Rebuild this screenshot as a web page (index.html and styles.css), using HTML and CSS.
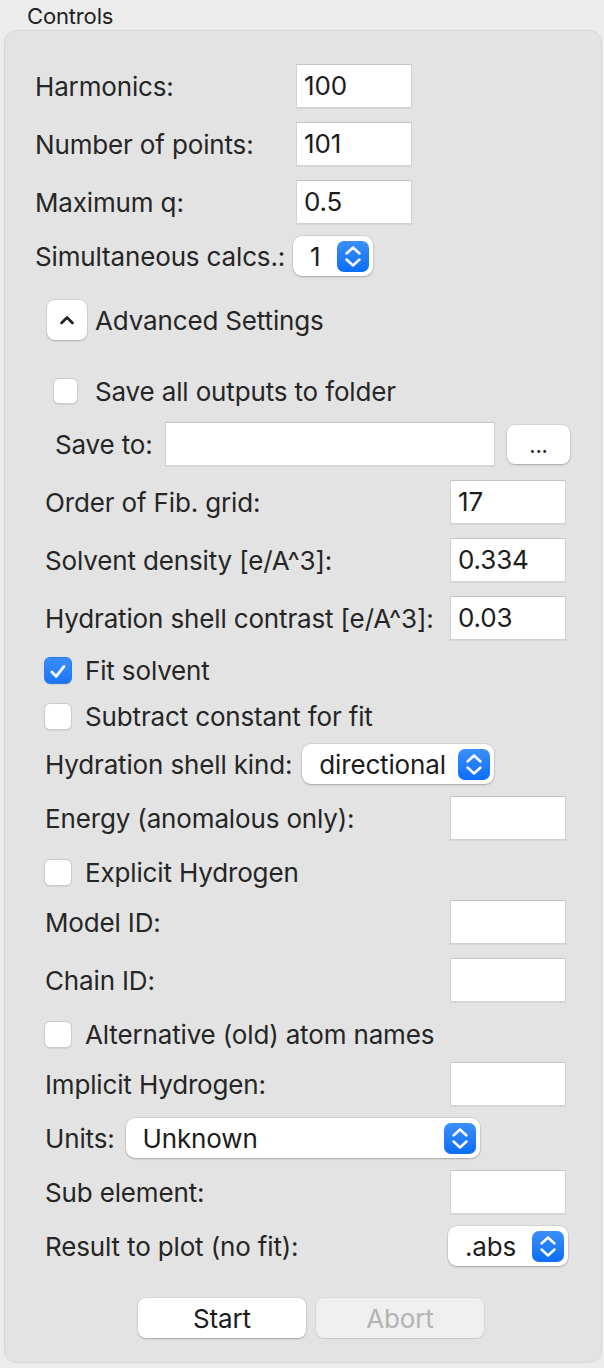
FILE: index.html
```html
<!DOCTYPE html>
<html>
<head>
<meta charset="utf-8">
<link rel="stylesheet" href="styles.css">
</head>
<body>
<div class="title">Controls</div>
<div class="panel">
  <div class="basic">
    <div class="row g14"><span class="lbl blbl">Harmonics:</span><div class="field">100</div></div>
    <div class="row g14"><span class="lbl blbl">Number of points:</span><div class="field">101</div></div>
    <div class="row g12"><span class="lbl blbl">Maximum q:</span><div class="field">0.5</div></div>
    <div class="row prow g24"><span class="lbl blbl">Simultaneous calcs.:</span>
      <div class="popup spin"><span class="ptext">1</span><span class="stepper"><svg width="32" height="31" viewBox="0 0 32 31"><path d="M9.5 12.5L16 6.5L22.5 12.5M9.5 18.5L16 24.5L22.5 18.5" fill="none" stroke="#fff" stroke-width="2.4" stroke-linecap="round" stroke-linejoin="round"/></svg></span></div>
    </div>
    <div class="row prow g37 adv"><span class="disc"><svg width="40" height="40" viewBox="0 0 40 40"><path d="M14.5 23L20 17.5L25.5 23" fill="none" stroke="#1e1e1e" stroke-width="2.6" stroke-linecap="round" stroke-linejoin="round"/></svg></span><span class="lbl">Advanced Settings</span></div>
  </div>
  <div class="advanced">
    <div class="row crow g17 saveall"><span class="chk small"></span><span class="lbl">Save all outputs to folder</span></div>
    <div class="row g14 saveto"><span class="lbl">Save to:</span><div class="field wide"></div><div class="btn dots">...</div></div>
    <div class="row g14 sb"><span class="lbl">Order of Fib. grid:</span><div class="field">17</div></div>
    <div class="row g14 sb"><span class="lbl">Solvent density [e/A^3]:</span><div class="field">0.334</div></div>
    <div class="row g16 sb"><span class="lbl">Hydration shell contrast [e/A^3]:</span><div class="field">0.03</div></div>
    <div class="row crow g18"><span class="chk on"><svg width="28" height="27" viewBox="0 0 28 27"><path d="M7.5 14L12 18.8L20.5 8" fill="none" stroke="#fff" stroke-width="3" stroke-linecap="round" stroke-linejoin="round"/></svg></span><span class="lbl">Fit solvent</span></div>
    <div class="row crow g14"><span class="chk"></span><span class="lbl">Subtract constant for fit</span></div>
    <div class="row prow g12"><span class="lbl">Hydration shell kind:</span>
      <div class="popup kind"><span class="ptext">directional</span><span class="stepper"><svg width="32" height="31" viewBox="0 0 32 31"><path d="M9.5 12.5L16 6.5L22.5 12.5M9.5 18.5L16 24.5L22.5 18.5" fill="none" stroke="#fff" stroke-width="2.4" stroke-linecap="round" stroke-linejoin="round"/></svg></span></div>
    </div>
    <div class="row g18 sb"><span class="lbl">Energy (anomalous only):</span><div class="field"></div></div>
    <div class="row crow g14"><span class="chk"></span><span class="lbl">Explicit Hydrogen</span></div>
    <div class="row g14 sb"><span class="lbl">Model ID:</span><div class="field"></div></div>
    <div class="row g18 sb"><span class="lbl">Chain ID:</span><div class="field"></div></div>
    <div class="row crow g14"><span class="chk"></span><span class="lbl">Alternative (old) atom names</span></div>
    <div class="row g12 sb"><span class="lbl">Implicit Hydrogen:</span><div class="field"></div></div>
    <div class="row prow g12"><span class="lbl">Units:</span>
      <div class="popup units"><span class="ptext">Unknown</span><span class="stepper"><svg width="32" height="31" viewBox="0 0 32 31"><path d="M9.5 12.5L16 6.5L22.5 12.5M9.5 18.5L16 24.5L22.5 18.5" fill="none" stroke="#fff" stroke-width="2.4" stroke-linecap="round" stroke-linejoin="round"/></svg></span></div>
    </div>
    <div class="row g12 sb"><span class="lbl">Sub element:</span><div class="field"></div></div>
    <div class="row prow g32 sb"><span class="lbl">Result to plot (no fit):</span>
      <div class="popup result"><span class="ptext">.abs</span><span class="stepper"><svg width="32" height="31" viewBox="0 0 32 31"><path d="M9.5 12.5L16 6.5L22.5 12.5M9.5 18.5L16 24.5L22.5 18.5" fill="none" stroke="#fff" stroke-width="2.4" stroke-linecap="round" stroke-linejoin="round"/></svg></span></div>
    </div>
  </div>
  <div class="actions">
    <div class="btn push">Start</div>
    <div class="btn push disabled">Abort</div>
  </div>
</div>
</body>
</html>
```

FILE: styles.css
```css
* { box-sizing: border-box; }
html, body { margin: 0; padding: 0; }
body {
  width: 604px;
  height: 1368px;
  overflow: hidden;
  background: #ececec;
  font-family: Inter, "Liberation Sans", "Noto Sans", sans-serif;
  color: #262626;
  letter-spacing: -0.15px;
}
.title {
  height: 30px;
  line-height: 30px;
  padding: 1px 0 0 27px;
  font-size: 22px;
  color: #222;
}
.panel {
  margin-left: 4px;
  width: 598px;
  height: 1333px;
  background: #e3e3e3;
  border: 1px solid #d8d8d8;
  border-radius: 12px;
  padding: 33px 35px 0 30px;
}
.row {
  display: flex;
  align-items: center;
  height: 44px;
  font-size: 26px;
}
.prow { height: 40px; }
.crow { height: 28px; }
.g12 { margin-bottom: 12px; }
.g14 { margin-bottom: 14px; }
.g16 { margin-bottom: 16px; }
.g17 { margin-bottom: 17px; }
.g18 { margin-bottom: 18px; }
.g24 { margin-bottom: 24px; }
.g32 { margin-bottom: 32px; }
.g37 { margin-bottom: 37px; }
.lbl { white-space: nowrap; }
.blbl { width: 261px; flex: none; }
.field {
  width: 116px;
  height: 44px;
  flex: none;
  background: #fff;
  border: 1px solid #d2d2d2;
  border-top-color: #c4c4c4;
  box-shadow: 0 1px 0 rgba(0,0,0,0.05);
  padding-left: 7px;
  line-height: 42px;
  color: #1c1c1c;
  font-size: 26px;
}
.popup {
  display: flex;
  align-items: center;
  height: 40px;
  background: #fff;
  border-radius: 9px;
  box-shadow: 0 0 0 1px rgba(0,0,0,0.06), 0 1px 2px rgba(0,0,0,0.22);
  padding: 0 4px 0 17px;
  flex: none;
}
.ptext { flex: 1; color: #1c1c1c; white-space: nowrap; }
.stepper {
  width: 32px;
  height: 31px;
  border-radius: 7px;
  background: linear-gradient(#3c8ffb, #0b6ef8);
  display: flex;
  flex: none;
}
.spin { width: 80px; margin-left: -3px; padding-left: 17px; }
.kind { width: 192px; margin-left: 10px; }
.units { width: 354px; margin-left: 11px; }
.result { width: 120px; margin-right: -2px; }
.adv { margin-left: 12px; }
.disc {
  width: 40px;
  height: 40px;
  background: #fff;
  border-radius: 8px;
  box-shadow: 0 0 0 1px rgba(0,0,0,0.05), 0 1px 2px rgba(0,0,0,0.2);
  margin-right: 8px;
  display: flex;
}
.advanced { padding-left: 10px; }
.sb { justify-content: space-between; }
.chk {
  width: 28px;
  height: 27px;
  background: #fff;
  border-radius: 6px;
  border: 1px solid #cbcbcb;
  box-shadow: 0 0.5px 1px rgba(0,0,0,0.08);
  margin-left: -1px;
  margin-right: 13px;
  flex: none;
  display: flex;
}
.chk.small { width: 25px; height: 26px; margin-left: 8px; margin-right: 17px; }
.chk.on {
  background: linear-gradient(#3b8dfb, #1a75f5);
  border-color: #2b7bea;
}
.saveto .lbl { margin-left: 10px; margin-right: 12px; }
.field.wide { flex: 1; width: auto; }
.btn {
  display: flex;
  align-items: center;
  justify-content: center;
  background: #fff;
  border-radius: 8px;
  box-shadow: 0 0 0 1px rgba(0,0,0,0.05), 0 1px 2px rgba(0,0,0,0.22);
  color: #1c1c1c;
  font-size: 26px;
}
.dots {
  width: 63px;
  height: 39px;
  margin-left: 12px;
  margin-right: -4px;
  font-size: 22px;
  padding-top: 2px;
}
.actions {
  display: flex;
  gap: 10px;
  padding-left: 103px;
}
.push { width: 168px; height: 40px; }
.push.disabled {
  background: #efefef;
  color: #b3b3b3;
  box-shadow: 0 0 0 1px rgba(0,0,0,0.04), 0 1px 1px rgba(0,0,0,0.08);
}
```
